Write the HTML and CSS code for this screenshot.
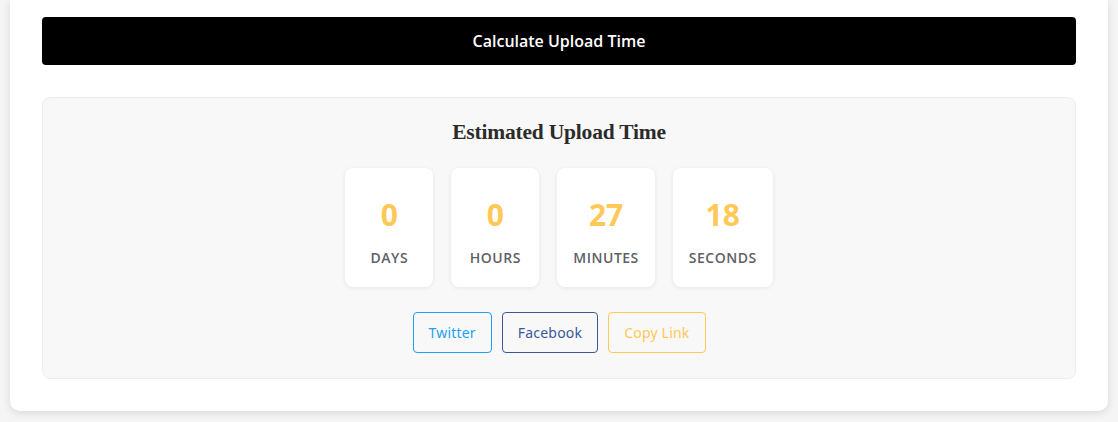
FILE: index.html
```html
<!DOCTYPE html>
<html lang="en">

<head>
    <meta charset="UTF-8">
    <meta name="viewport" content="width=device-width, initial-scale=1.0">
    <title>Upload Time Calculator</title>
    <link rel="stylesheet" href="styles.css">
</head>

<body>
    <!-- Tarjeta principal -->
    <main class="card">
        <button class="btn-calc" type="button">Calculate Upload Time</button>

        <!-- Resultado -->
        <section class="result">
            <h2>Estimated Upload Time</h2>
            <div class="countdown">
                <div class="unit">
                    <span class="num">0</span>
                    <span class="label">Days</span>
                </div>
                <div class="unit">
                    <span class="num">0</span>
                    <span class="label">Hours</span>
                </div>
                <div class="unit">
                    <span class="num">27</span>
                    <span class="label">Minutes</span>
                </div>
                <div class="unit">
                    <span class="num">18</span>
                    <span class="label">Seconds</span>
                </div>
            </div>
            <div class="share">
                <a href="#" class="share-btn twitter">Twitter</a>
                <a href="#" class="share-btn facebook">Facebook</a>
                <a href="#" class="share-btn copy">Copy Link</a>
            </div>
        </section>
    </main>
</body>

</html>
```

FILE: styles.css
```css
/* Estilos generales */

html,
body {
    margin: 0;
    padding: 0;
    background-color: #f5f5f5;
    font-family: "Open Sans", Arial, sans-serif;
}

body {
    padding: 0 10px 12px;
}

/* Tarjeta */

.card {
    display: flex;
    flex-direction: column;
    gap: 32px;
    background-color: #ffffff;
    border-radius: 0 0 10px 10px;
    box-shadow: 0 2px 8px rgba(0, 0, 0, 0.12);
    padding: 17px 32px 32px;
}

.btn-calc {
    height: 48px;
    width: 100%;
    background-color: #000000;
    color: #ffffff;
    border: none;
    border-radius: 4px;
    font-family: "Open Sans", Arial, sans-serif;
    font-size: 16px;
    font-weight: 600;
    cursor: pointer;
}

/* Resultado */

.result {
    background-color: #f8f8f8;
    border: 1px solid #ececec;
    border-radius: 8px;
    padding: 22px 20px 25px;
    text-align: center;
}

.result h2 {
    margin: 0 0 23px;
    font-family: "Liberation Serif", "Times New Roman", serif;
    font-size: 21.5px;
    font-weight: 700;
    color: #2b2b2b;
    letter-spacing: -0.2px;
}

.countdown {
    display: flex;
    justify-content: center;
    gap: 18px;
}

.unit {
    display: flex;
    flex-direction: column;
    align-items: center;
    min-width: 56px;
    padding: 29px 16px 20px;
    background-color: #ffffff;
    border-radius: 8px;
    box-shadow: 0 1px 4px rgba(0, 0, 0, 0.08);
}

.num {
    font-size: 30px;
    font-weight: 700;
    line-height: 36px;
    color: #ffc857;
}

.label {
    margin-top: 15px;
    font-size: 14px;
    font-weight: 600;
    line-height: 19px;
    color: #5f5f66;
    text-transform: uppercase;
    letter-spacing: 0.5px;
}

/* Botones de compartir */

.share {
    display: flex;
    justify-content: center;
    gap: 10px;
    margin-top: 25px;
}

.share-btn {
    display: inline-block;
    padding: 9px 15px;
    border: 1px solid;
    border-radius: 4px;
    font-family: "Noto Sans", Arial, sans-serif;
    font-size: 14px;
    line-height: 21px;
    letter-spacing: 0.2px;
    text-decoration: none;
    background-color: transparent;
}

.twitter {
    color: #1da1f2;
    border-color: #1da1f2;
}

.facebook {
    color: #3b5998;
    border-color: #3b5998;
}

.copy {
    color: #ffc857;
    border-color: #ffc857;
}
```
